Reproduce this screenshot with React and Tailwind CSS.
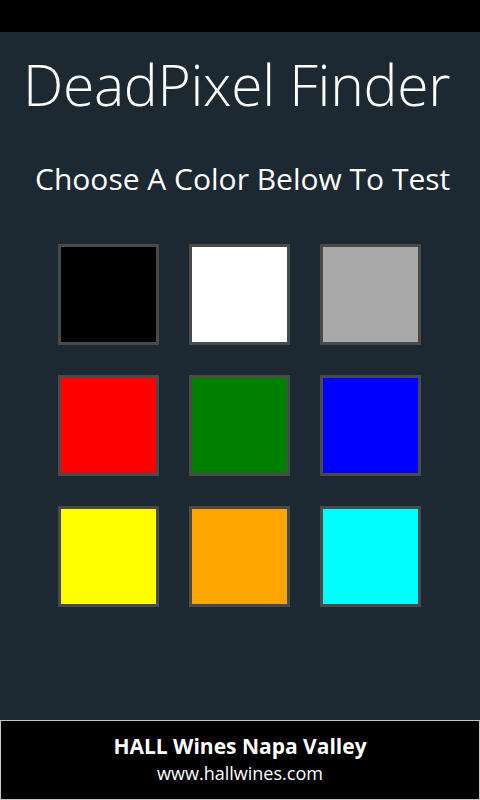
import React from 'react';

const colors = [
  'bg-[#000000]', 'bg-[#ffffff]', 'bg-[#a9a9a9]',
  'bg-[#ff0000]', 'bg-[#008000]', 'bg-[#0000ff]',
  'bg-[#ffff00]', 'bg-[#ffa500]', 'bg-[#00ffff]',
];

export default function App() {
  return (
    <div className="w-[480px] h-[800px] flex flex-col bg-[#1c2832] text-white font-['Open_Sans',sans-serif] overflow-hidden">
      <div className="h-8 bg-black shrink-0" />
      <div className="flex-1 flex flex-col">
        <h1 className="mt-[17px] pl-[23px] text-[57px] leading-[70px] font-light whitespace-nowrap tracking-[-0.3px]">DeadPixel Finder</h1>
        <p className="mt-[40px] pl-[35px] text-[30px] leading-[40px] whitespace-nowrap">Choose A Color Below To Test</p>
        <div className="mt-[45px] ml-[58px] grid grid-cols-[101px_101px_101px] gap-x-[30px] gap-y-[30px]">
          {colors.map((c) => (
            <button key={c} className={`w-[101px] h-[101px] border-[3px] border-[#4a4a4a] ${c}`} />
          ))}
        </div>
      </div>
      <div className="h-20 shrink-0 bg-black border border-[#c4c4cc] flex flex-col items-center justify-center">
        <div className="text-[21px] leading-[27px] font-bold">HALL Wines Napa Valley</div>
        <div className="text-[18px] leading-[27px]">www.hallwines.com</div>
      </div>
    </div>
  );
}
